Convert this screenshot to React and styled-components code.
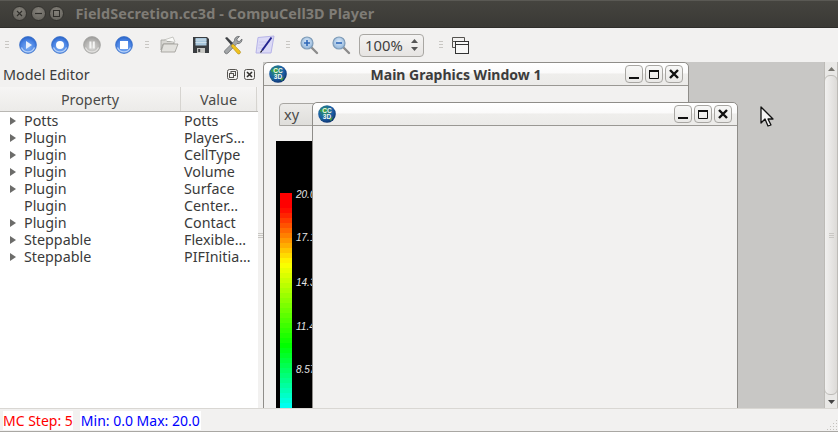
import React from 'react';
import styled, { createGlobalStyle } from 'styled-components';

const GlobalStyle = createGlobalStyle`
  html, body {
    margin: 0;
    padding: 0;
    background: #f2f1f0;
    overflow: hidden;
  }
  * { box-sizing: border-box; }
`;

const Frame = styled.div`
  width: 838px;
  height: 432px;
  display: flex;
  flex-direction: column;
  overflow: hidden;
  background: #f2f1f0;
  color: #3c3c3c;
  font-family: 'Noto Sans', 'Open Sans', sans-serif;
  font-size: 14px;
`;

const TitleBar = styled.div`
  height: 28px;
  flex: none;
  display: flex;
  align-items: center;
  padding: 0 0 1px 12px;
  background: linear-gradient(#45443f, #3a3935);
  border-top: 1px solid #5a5954;
  border-bottom: 1px solid #2f2e2b;
`;

const CircleBtn = styled.span`
  width: 15px;
  height: 15px;
  margin-right: 3.5px;
  border-radius: 50%;
  background: radial-gradient(circle at 50% 35%, #85827b, #5f5d57);
  border: 1px solid #33322e;
  display: flex;
  align-items: center;
  justify-content: center;
  color: #2f2e2a;
`;

const TitleText = styled.span`
  margin-left: 8px;
  font-weight: 700;
  font-size: 14.4px;
  letter-spacing: 0.1px;
  color: #7f7c76;
  white-space: nowrap;
`;

const Toolbar = styled.div`
  height: 34px;
  flex: none;
  display: flex;
  align-items: center;
  padding: 0 0 0 5px;
`;

const Grip = styled.span`
  width: 4px;
  height: 9px;
  flex: none;
  margin-left: ${p => p.$left || 0}px;
  margin-right: ${p => p.$right || 0}px;
  background: repeating-linear-gradient(#c9c7c3 0 1px, transparent 1px 3px);
`;

const ToolIcon = styled.span`
  width: 20px;
  height: 20px;
  flex: none;
  margin-left: ${p => p.$left ?? 12}px;
  display: flex;
  align-items: center;
  justify-content: center;
`;

const Spin = styled.div`
  width: 65px;
  height: 23px;
  flex: none;
  margin-left: 8px;
  padding-left: 5px;
  display: flex;
  align-items: center;
  justify-content: space-between;
  border: 1px solid #a9a7a3;
  border-radius: 4px;
  background: linear-gradient(#f4f3f2, #e6e4e2);
  font-size: 14.8px;
  color: #3f3f3f;
`;

const SpinArrows = styled.span`
  width: 18px;
  display: flex;
  flex-direction: column;
  align-items: center;
  gap: 4px;
`;

const Body = styled.div`
  flex: 1;
  min-height: 0;
  display: flex;
`;

const Dock = styled.div`
  width: 258px;
  flex: none;
  display: flex;
  flex-direction: column;
`;

const DockHead = styled.div`
  height: 25px;
  flex: none;
  display: flex;
  align-items: center;
  padding: 0 3px 1px 3px;
  font-size: 14.4px;
  color: #3c3c3c;
`;

const DockTitle = styled.span`
  flex: 1;
`;

const DockBtn = styled.span`
  width: 11px;
  height: 11px;
  margin-left: 6px;
  display: flex;
`;

const Tree = styled.div`
  flex: 1;
  background: #fff;
  display: flex;
  flex-direction: column;
  font-size: 14.3px;
`;

const HeadRow = styled.div`
  height: 25px;
  flex: none;
  display: grid;
  grid-template-columns: 181px 76px;
  background: linear-gradient(#f6f5f4, #ecebe9);
  border-bottom: 1px solid #b9b7b3;
`;

const HeadCell = styled.div`
  display: flex;
  align-items: center;
  justify-content: center;
  color: #4a4a48;
  border-right: 1px solid #d6d4d0;
`;

const Row = styled.div`
  height: 17px;
  display: grid;
  grid-template-columns: 24px 160px 1fr;
  align-items: center;
  line-height: 17px;
  color: #3a3a3a;
  white-space: nowrap;
`;

const Caret = styled.span`
  width: 0;
  height: 0;
  margin-left: 10px;
  border-left: 6px solid #6c6c6a;
  border-top: 4px solid transparent;
  border-bottom: 4px solid transparent;
  visibility: ${p => (p.$hidden ? 'hidden' : 'visible')};
`;

const Splitter = styled.div`
  width: 5px;
  flex: none;
  display: flex;
  align-items: center;
  justify-content: center;
`;

const SplitGrip = styled.span`
  width: 5px;
  height: 5px;
  background: repeating-linear-gradient(#c9c7c3 0 1px, transparent 1px 2px);
`;

const MdiArea = styled.div`
  flex: 1;
  position: relative;
  overflow: hidden;
  background: #c8c7c5;
`;

const SubWindow = styled.div`
  position: absolute;
  left: ${p => p.$x}px;
  top: ${p => p.$y}px;
  width: 426px;
  height: 420px;
  display: flex;
  flex-direction: column;
  background: #f2f1f0;
  border: 1px solid #8f8d89;
  border-radius: 5px 5px 0 0;
`;

const SubTitle = styled.div`
  height: 23px;
  flex: none;
  display: flex;
  align-items: center;
  padding: 0 5px 0 5px;
  border-bottom: 1px solid #9a9894;
  border-radius: 5px 5px 0 0;
  background: linear-gradient(#ffffff 0, #fbfafa 45%, #efeeec 50%, #ecebe9 100%);
`;

const SubName = styled.span`
  flex: 1;
  text-align: center;
  font-weight: 700;
  font-size: 14px;
  color: #3c3c3c;
  white-space: nowrap;
`;

const WinBtns = styled.div`
  margin-left: auto;
  display: flex;
  gap: 2px;
`;

const WinBtn = styled.span`
  width: 18px;
  height: 18px;
  display: flex;
  align-items: center;
  justify-content: center;
  border: 1px solid #a8a6a2;
  border-radius: 4px;
  background: linear-gradient(#f8f8f7, #e9e8e6);
`;

const SubBody = styled.div`
  flex: 1;
  padding: 17px 0 0 12px;
`;

const Tab = styled.div`
  width: 50px;
  height: 23px;
  margin-left: 3px;
  padding: 0 0 2px 4px;
  display: flex;
  align-items: center;
  border: 1px solid #a8a6a2;
  border-radius: 4px 0 0 0;
  background: linear-gradient(#ecebe9, #dfdedb);
  font-size: 14.5px;
  color: #4a4a48;
`;

const RenderView = styled.div`
  width: 400px;
  height: 280px;
  margin-top: 15px;
  background: #000;
`;

const Scrollbar = styled.div`
  width: 14px;
  flex: none;
  display: flex;
  flex-direction: column;
  border-left: 1px solid #bdbbb7;
  border-right: 1px solid #bdbbb7;
  background: #e9e8e6;
`;

const ScrollEnd = styled.span`
  height: 13px;
  flex: none;
  display: flex;
  align-items: center;
  justify-content: center;
`;

const Thumb = styled.span`
  flex: 1;
  display: flex;
  align-items: center;
  justify-content: center;
  border: 1px solid #bdbbb7;
  border-radius: 6px;
  margin: 0 -1px;
  background: linear-gradient(90deg, #f2f1f0, #dcdad7);
`;

const Cursor = styled.svg`
  position: absolute;
  left: 497px;
  top: 44px;
`;

const StatusBar = styled.div`
  height: 24px;
  flex: none;
  position: relative;
  display: flex;
  align-items: center;
  gap: 7px;
  padding: 1px 0 0 3px;
  border-top: 1px solid #d9d7d3;
  border-bottom: 1px solid #a9a7a3;
  font-size: 14px;
`;

const StatusLabel = styled.span`
  height: 19px;
  line-height: 19px;
  background: #fff;
  color: ${p => p.$color};
  padding: 0 ${p => p.$pad || 0}px;
  white-space: nowrap;
`;

const ResizeGrip = styled.span`
  position: absolute;
  right: 1px;
  bottom: 1px;
  width: 11px;
  height: 11px;
  background: radial-gradient(#c4c2be 0.7px, transparent 1px) 0 0 / 3px 3px;
  clip-path: polygon(100% 0, 100% 100%, 0 100%);
`;

const Lens = ({ id, children }) => (
  <svg width="20" height="20" viewBox="0 0 20 20">
    <defs>
      <radialGradient id={id} cx="50%" cy="40%" r="60%">
        <stop offset="0" stopColor="#dce9f7" />
        <stop offset="1" stopColor="#8fb4da" />
      </radialGradient>
    </defs>
    <path d="M12 12 L18 18" stroke="#8c8c8c" strokeWidth="2.4" strokeLinecap="round" />
    <circle cx="8" cy="8" r="6" fill={`url(#${id})`} stroke="#7f9cb8" strokeWidth="1.2" />
    {children}
  </svg>
);

const Media = ({ id, grey, children }) => (
  <svg width="20" height="20" viewBox="0 0 20 20">
    <defs>
      <radialGradient id={id} cx="50%" cy="65%" r="60%">
        <stop offset="0" stopColor={grey ? '#d8d8d6' : '#7eaef2'} />
        <stop offset="0.7" stopColor={grey ? '#b4b3b1' : '#4a84e4'} />
        <stop offset="1" stopColor={grey ? '#a09f9d' : '#2f69cd'} />
      </radialGradient>
    </defs>
    <circle cx="10" cy="10" r="8.4" fill={`url(#${id})`} stroke={grey ? '#a3a3a1' : '#3a70c8'} strokeWidth="0.8" />
    <path d="M3.5 12.5a7 7 0 0 0 13 0" fill="none" stroke={grey ? '#e2e1df' : '#b6d0f7'} strokeWidth="1.2" />
    {children}
  </svg>
);

const Logo = ({ id }) => (
  <svg width="18" height="18" viewBox="0 0 18 18">
    <defs>
      <radialGradient id={id} cx="40%" cy="35%" r="70%">
        <stop offset="0" stopColor="#2f9a5c" />
        <stop offset="0.6" stopColor="#1c5fa8" />
        <stop offset="1" stopColor="#0b2c66" />
      </radialGradient>
    </defs>
    <circle cx="9" cy="9" r="8.8" fill={`url(#${id})`} />
    <path d="M1.500 6 Q6 1.500 9 3.500 L7 8 Z M11 14 Q15 13 16.500 9 L13 16 Z M2 12 L5 16 L3 14 Z" fill="#3fa241" />
    <text x="9" y="8.4" textAnchor="middle" fontFamily="Liberation Sans" fontWeight="700" fontSize="6.5" fill="#f4f7f2">CC</text>
    <text x="9" y="14.200" textAnchor="middle" fontFamily="Liberation Sans" fontWeight="700" fontSize="6.5" fill="#f4f7f2">3D</text>
  </svg>
);

const MinGlyph = () => (
  <svg width="12" height="12" viewBox="0 0 12 12"><rect x="1" y="9" width="10" height="2" fill="#111" /></svg>
);
const MaxGlyph = () => (
  <svg width="12" height="12" viewBox="0 0 12 12"><path d="M1.500 2.500h9v8h-9z" fill="none" stroke="#111" strokeWidth="1" /><rect x="1" y="2" width="10" height="2" fill="#111" /></svg>
);
const CloseGlyph = () => (
  <svg width="12" height="12" viewBox="0 0 12 12"><path d="M2 2l8 8M10 2l-8 8" stroke="#111" strokeWidth="2.4" /></svg>
);

const WindowButtons = () => (
  <WinBtns>
    <WinBtn><MinGlyph /></WinBtn>
    <WinBtn><MaxGlyph /></WinBtn>
    <WinBtn><CloseGlyph /></WinBtn>
  </WinBtns>
);

// colour bar is a vtk legend, hue runs from red at the top towards cyan
const BAND_H = 5;
const bands = Array.from({ length: 44 }, (_, i) => i);
const ticks = [
  { label: '20.0', y: 57 },
  { label: '17.1', y: 100 },
  { label: '14.3', y: 145 },
  { label: '11.4', y: 189 },
  { label: '8.57', y: 232 },
];

const hueAt = y => {
  if (y < 12) return 0;
  if (y < 68) return ((y - 12) / 56) * 60;
  if (y < 150) return 60 + ((y - 68) / 82) * 60;
  return Math.min(180, 120 + ((y - 150) / 64) * 60);
};

const ColorBar = () => (
  <svg width="400" height="280" viewBox="0 0 400 280">
    {bands.map(i => (
      <rect
        key={i}
        x="4"
        y={52 + i * BAND_H}
        width="12"
        height={BAND_H}
        fill={`hsl(${hueAt(i * BAND_H)}, 100%, 50%)`}
      />
    ))}
    {ticks.map(t => (
      <text key={t.label} x="20" y={t.y} fontFamily="Liberation Sans" fontStyle="italic" fontSize="10" fill="#e6e6e6">
        {t.label}
      </text>
    ))}
  </svg>
);

const rows = [
  ['Potts', 'Potts', true],
  ['Plugin', 'PlayerS…', true],
  ['Plugin', 'CellType', true],
  ['Plugin', 'Volume', true],
  ['Plugin', 'Surface', true],
  ['Plugin', 'Center…', false],
  ['Plugin', 'Contact', true],
  ['Steppable', 'Flexible…', true],
  ['Steppable', 'PIFInitia…', true],
];

const App = () => {
  return (
    <>
      <GlobalStyle />
      <Frame>
        <TitleBar>
          <CircleBtn>
            <svg width="7" height="7" viewBox="0 0 7 7"><path d="M1 1l5 5M6 1L1 6" stroke="#2f2e2a" strokeWidth="1.2" /></svg>
          </CircleBtn>
          <CircleBtn>
            <svg width="7" height="7" viewBox="0 0 7 7"><path d="M0 3.500h7" stroke="#2f2e2a" strokeWidth="1.2" /></svg>
          </CircleBtn>
          <CircleBtn>
            <svg width="7" height="7" viewBox="0 0 7 7"><rect x="0.5" y="0.5" width="6" height="6" fill="none" stroke="#2f2e2a" /></svg>
          </CircleBtn>
          <TitleText>FieldSecretion.cc3d - CompuCell3D Player</TitleText>
        </TitleBar>

        <Toolbar>
          <Grip />
          <ToolIcon $left={9}>
            <Media id="m1"><path d="M8 6l6 4-6 4z" fill="#e8f0fc" /></Media>
          </ToolIcon>
          <ToolIcon>
            <Media id="m2"><circle cx="10" cy="10" r="4" fill="#fff" /></Media>
          </ToolIcon>
          <ToolIcon>
            <Media id="m3" grey><path d="M7.400 6.500h2v7h-2zM10.800 6.500h2v7h-2z" fill="#f4f4f3" /></Media>
          </ToolIcon>
          <ToolIcon>
            <Media id="m4"><rect x="6" y="6" width="8" height="8" fill="#fff" /></Media>
          </ToolIcon>
          <Grip $left={11} />
          <ToolIcon $left={10}>
            <svg width="20" height="20" viewBox="0 0 20 20">
              <path d="M2 5h5l1 1.500h7V9H4L2 15z" fill="#d8d7d3" stroke="#a09f9a" strokeWidth="0.8" />
              <path d="M5 5l9-3 2 5" fill="#fafaf8" stroke="#b5b4af" strokeWidth="0.7" />
              <path d="M4.500 9H19l-3 8H2z" fill="#e2e1dd" stroke="#9c9b96" strokeWidth="0.8" />
            </svg>
          </ToolIcon>
          <ToolIcon>
            <svg width="20" height="20" viewBox="0 0 20 20">
              <path d="M2 2h14l2 2v14H2z" fill="#3a3d40" />
              <rect x="4.500" y="3" width="11" height="7.500" fill="#a9c7dc" />
              <path d="M4.500 5h11M4.500 7.500h11" stroke="#d8e6ee" strokeWidth="0.8" />
              <rect x="6" y="13" width="8" height="5" fill="#c8c8c4" />
              <rect x="7.200" y="14" width="2" height="3" fill="#45474a" />
            </svg>
          </ToolIcon>
          <ToolIcon>
            <svg width="20" height="20" viewBox="0 0 20 20">
              <path d="M16.500 1.500l-2.600 2.600.4 2 2 .4L19 4a4 4 0 0 1-5 4.500L5 18a1.800 1.800 0 0 1-3-2.600l9.500-9.500A4 4 0 0 1 16.500 1.500z" fill="#a3a6a8" stroke="#5c5f62" strokeWidth="0.7" />
              <path d="M2 3l2-1 6 6-2 2z" fill="#3f4245" />
              <path d="M10 9l7 7a1.700 1.700 0 0 1-2.500 2.500L8 11z" fill="#efc11f" stroke="#a37e10" strokeWidth="0.5" />
            </svg>
          </ToolIcon>
          <ToolIcon>
            <svg width="20" height="20" viewBox="0 0 20 20">
              <path d="M3 2.500L19 1l-3 17H1z" fill="#dcdaf6" stroke="#b7b4e8" strokeWidth="1" />
              <path d="M4 7h11M3.500 10h8M3 13h6" stroke="#c6c3ee" strokeWidth="0.8" />
              <path d="M7 15.500L16.500 2.500" stroke="#23238f" strokeWidth="2" />
              <path d="M5.500 17.500l1.500-2" stroke="#111" strokeWidth="1.200" />
            </svg>
          </ToolIcon>
          <Grip $left={11} />
          <ToolIcon $left={9}>
            <Lens id="z1"><path d="M5 8h6M8 5v6" stroke="#2f68b8" strokeWidth="1.6" /></Lens>
          </ToolIcon>
          <ToolIcon>
            <Lens id="z2"><path d="M5 8h6" stroke="#2f68b8" strokeWidth="1.6" /></Lens>
          </ToolIcon>
          <Spin>
            100%
            <SpinArrows>
              <svg width="7" height="4" viewBox="0 0 7 4"><path d="M3.500 0L7 4H0z" fill="#555" /></svg>
              <svg width="7" height="4" viewBox="0 0 7 4"><path d="M0 0h7L3.500 4z" fill="#555" /></svg>
            </SpinArrows>
          </Spin>
          <Grip $left={15} />
          <ToolIcon $left={7}>
            <svg width="20" height="20" viewBox="0 0 20 20">
              <path d="M2.500 2.500h12v4h-12zM2.500 6.500v6h3" fill="#f2f1f0" stroke="#55534f" strokeWidth="1" />
              <rect x="5.500" y="6.500" width="13" height="12" fill="#f8f8f7" stroke="#333" strokeWidth="1" />
              <path d="M5.500 9.500h13" stroke="#333" strokeWidth="1" />
            </svg>
          </ToolIcon>
        </Toolbar>

        <Body>
          <Dock>
            <DockHead>
              <DockTitle>Model Editor</DockTitle>
              <DockBtn>
                <svg width="11" height="11" viewBox="0 0 11 11">
                  <rect x="0.5" y="0.5" width="10" height="10" rx="2" fill="none" stroke="#55534f" />
                  <rect x="4" y="2.500" width="4.500" height="4" fill="none" stroke="#55534f" />
                  <rect x="2.500" y="4.500" width="4" height="4" fill="#f2f1f0" stroke="#55534f" />
                </svg>
              </DockBtn>
              <DockBtn>
                <svg width="11" height="11" viewBox="0 0 11 11">
                  <rect x="0.5" y="0.5" width="10" height="10" rx="2" fill="none" stroke="#55534f" />
                  <path d="M3 3l5 5M8 3l-5 5" stroke="#33322f" strokeWidth="1.6" />
                </svg>
              </DockBtn>
            </DockHead>
            <Tree>
              <HeadRow>
                <HeadCell>Property</HeadCell>
                <HeadCell>Value</HeadCell>
              </HeadRow>
              {rows.map(([name, value, expandable], i) => (
                <Row key={i}>
                  <Caret $hidden={!expandable} />
                  <span>{name}</span>
                  <span>{value}</span>
                </Row>
              ))}
            </Tree>
          </Dock>

          <Splitter><SplitGrip /></Splitter>

          <MdiArea>
            <SubWindow $x={0} $y={0}>
              <SubTitle>
                <Logo id="l1" />
                <SubName>Main Graphics Window 1</SubName>
                <WindowButtons />
              </SubTitle>
              <SubBody>
                <Tab>xy</Tab>
                <RenderView><ColorBar /></RenderView>
              </SubBody>
            </SubWindow>
            <SubWindow $x={49} $y={40}>
              <SubTitle>
                <Logo id="l2" />
                <WindowButtons />
              </SubTitle>
            </SubWindow>
            <Cursor width="15" height="21" viewBox="0 0 15 21">
              <path d="M1 1v16l4-4 3 7 3-1-3-6h5z" fill="#f4f4f4" stroke="#111" strokeWidth="1.3" strokeLinejoin="round" />
            </Cursor>
          </MdiArea>

          <Scrollbar>
            <ScrollEnd>
              <svg width="7" height="4" viewBox="0 0 7 4"><path d="M3.500 0L7 4H0z" fill="#77756f" /></svg>
            </ScrollEnd>
            <Thumb><SplitGrip /></Thumb>
            <ScrollEnd>
              <svg width="7" height="4" viewBox="0 0 7 4"><path d="M0 0h7L3.500 4z" fill="#444" /></svg>
            </ScrollEnd>
          </Scrollbar>
        </Body>

        <StatusBar>
          <StatusLabel $color="#ff0000">MC Step: 5</StatusLabel>
          <StatusLabel $color="#0000ff" $pad={1}>Min: 0.0 Max: 20.0</StatusLabel>
          <ResizeGrip />
        </StatusBar>
      </Frame>
    </>
  );
};

export default App;
